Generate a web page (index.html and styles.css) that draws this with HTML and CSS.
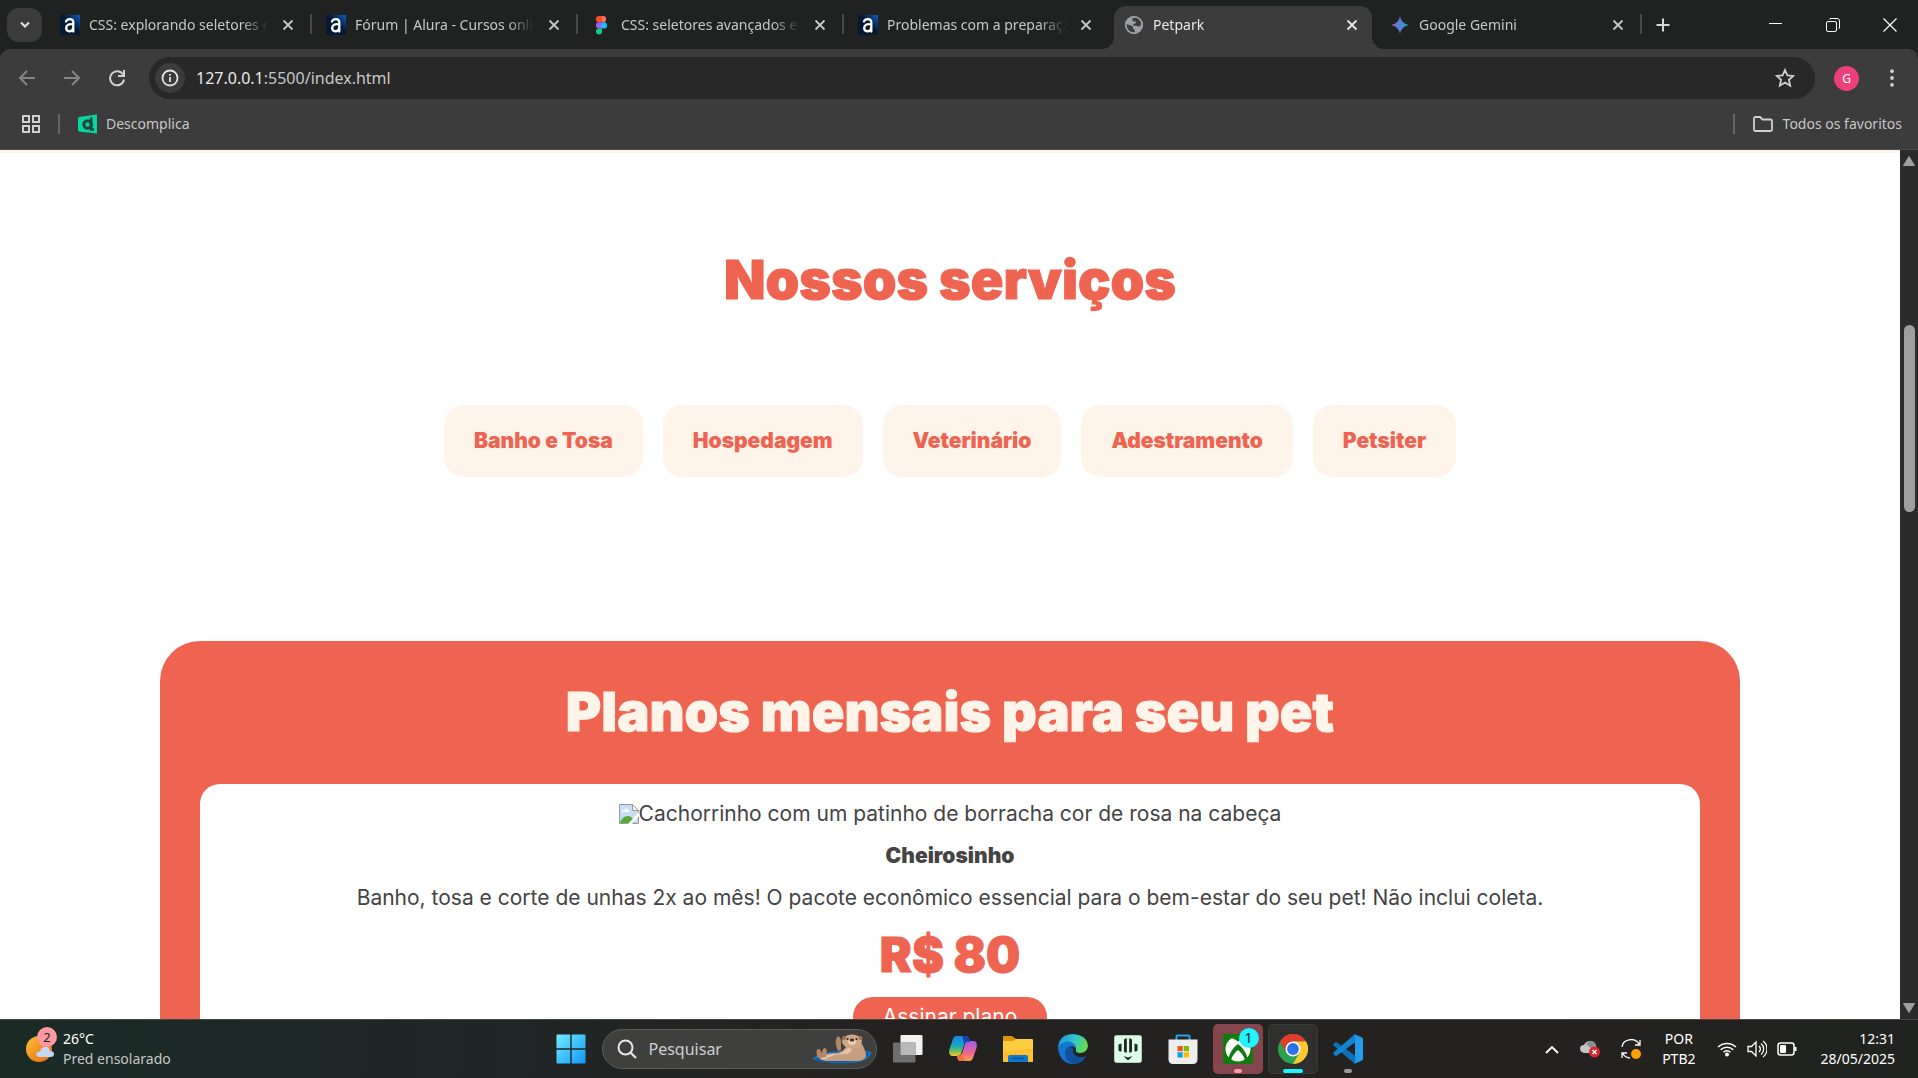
FILE: index.html
```html
<!DOCTYPE html>
<html lang="pt-br">
<head>
    <meta charset="UTF-8">
    <meta name="viewport" content="width=device-width, initial-scale=1.0">
    <title>Petpark</title>
    <link rel="stylesheet" href="styles.css">
</head>
<body>
    <!-- Shared icons -->
    <svg class="sprite" aria-hidden="true">
        <defs>
            <linearGradient id="alura-bg" x1="0" y1="1" x2="1" y2="0">
                <stop offset="0.55" stop-color="#051933"/>
                <stop offset="1" stop-color="#0c5fc4"/>
            </linearGradient>
            <linearGradient id="gemini-bg" x1="0" y1="0" x2="1" y2="0">
                <stop offset="0.1" stop-color="#a06ab4"/>
                <stop offset="0.5" stop-color="#4a84dc"/>
                <stop offset="1" stop-color="#1fa4e0"/>
            </linearGradient>
        </defs>
        <symbol id="alura" viewBox="0 0 20 20">
            <rect width="20" height="20" fill="url(#alura-bg)"/>
            <path d="M6 6.500C7 3.400 13 3 13.300 7V16.500M13 9.500C9 8.500 6.200 10 6.200 13C6.200 17 12 17.500 13 13.500" fill="none" stroke="#fff" stroke-width="2.300" stroke-linecap="round"/>
        </symbol>
        <symbol id="close" viewBox="0 0 12 12">
            <path d="M1.500 1.500L10.500 10.500M10.500 1.500L1.500 10.500" fill="none" stroke="currentColor" stroke-width="1.800"/>
        </symbol>
    </svg>

    <div class="tab-strip">
        <button class="tab-search" aria-label="Pesquisar guias">
            <svg width="12" height="8" viewBox="0 0 12 8"><path d="M2 1.500L6 5.500L10 1.500" fill="none" stroke="#e3e3e3" stroke-width="2"/></svg>
        </button>
        <div class="tabs">
            <div class="tab">
                <svg width="20" height="20"><use href="#alura"/></svg>
                <span class="tab-title">CSS: explorando seletores e estilos</span>
                <button class="tab-close" aria-label="Fechar"><svg width="12" height="12"><use href="#close"/></svg></button>
            </div>
            <div class="tab">
                <svg width="20" height="20"><use href="#alura"/></svg>
                <span class="tab-title">Fórum | Alura - Cursos online</span>
                <button class="tab-close" aria-label="Fechar"><svg width="12" height="12"><use href="#close"/></svg></button>
            </div>
            <div class="tab">
                <svg width="20" height="20" viewBox="0 0 20 20">
                    <path d="M10 1H7a3 3 0 0 0 0 6.300h3z" fill="#f24e1e"/>
                    <path d="M10 1h1a3.100 3.100 0 0 1 0 6.300h-1z" fill="#ff7262"/>
                    <path d="M10 7.300H7a3 3 0 0 0 0 6.200h3z" fill="#a259ff"/>
                    <circle cx="12" cy="10.400" r="3.100" fill="#1abcfe"/>
                    <path d="M7 13.500h3v3A3 3 0 1 1 7 13.500z" fill="#0acf83"/>
                </svg>
                <span class="tab-title">CSS: seletores avançados e mais</span>
                <button class="tab-close" aria-label="Fechar"><svg width="12" height="12"><use href="#close"/></svg></button>
            </div>
            <div class="tab">
                <svg width="20" height="20"><use href="#alura"/></svg>
                <span class="tab-title">Problemas com a preparação</span>
                <button class="tab-close" aria-label="Fechar"><svg width="12" height="12"><use href="#close"/></svg></button>
            </div>
            <div class="tab active">
                <svg width="20" height="20" viewBox="0 0 20 20">
                    <circle cx="10" cy="10" r="9" fill="#9aa0a6"/>
                    <path d="M10.500 2.500C8 3 7.500 5.500 9.500 6.500H12C13 9 9 8 9 10.500C11 11 14 10 14.500 12L18 9C17.500 5 14.500 2 10.500 2.500zM2 9C5 10 9 10.500 9 12.500C8.800 14.500 12 14 10.500 17.500C5 18 2 14 2 9z" fill="#3c3c3c"/>
                    <circle cx="10" cy="10" r="8.200" fill="none" stroke="#9aa0a6" stroke-width="1.600"/>
                </svg>
                <span class="tab-title">Petpark</span>
                <button class="tab-close" aria-label="Fechar"><svg width="12" height="12"><use href="#close"/></svg></button>
            </div>
            <div class="tab">
                <svg width="20" height="20" viewBox="0 0 20 20"><path d="M10 1C10.800 6 14 9.200 19 10C14 10.800 10.800 14 10 19C9.200 14 6 10.800 1 10C6 9.200 9.200 6 10 1z" fill="url(#gemini-bg)"/></svg>
                <span class="tab-title">Google Gemini</span>
                <button class="tab-close" aria-label="Fechar"><svg width="12" height="12"><use href="#close"/></svg></button>
            </div>
        </div>
        <button class="new-tab" aria-label="Nova guia">
            <svg width="14" height="14" viewBox="0 0 14 14"><path d="M7 0.500V13.500M0.500 7H13.500" stroke="#d6d6d6" stroke-width="2"/></svg>
        </button>
        <div class="window-controls">
            <button aria-label="Minimizar"><svg width="14" height="14" viewBox="0 0 14 14"><path d="M0 5.500H13" stroke="#fff"/></svg></button>
            <button aria-label="Restaurar"><svg width="14" height="14" viewBox="0 0 14 14"><rect x="0.500" y="3.500" width="10" height="10" rx="1.500" fill="none" stroke="#fff"/><path d="M3 1.500Q3.500 0.500 5 0.500H11Q13.500 0.500 13.500 3V9Q13.500 10.500 12.500 11" fill="none" stroke="#fff"/></svg></button>
            <button aria-label="Fechar janela"><svg width="14" height="14" viewBox="0 0 14 14"><path d="M0.500 0.500L13.500 13.500M13.500 0.500L0.500 13.500" stroke="#fff" stroke-width="1.200"/></svg></button>
        </div>
    </div>

    <div class="browser-bars">
        <div class="toolbar">
            <button aria-label="Voltar"><svg width="18" height="18" viewBox="0 0 18 18"><path d="M17 9H2.500M9 2L2 9L9 16" fill="none" stroke="#858585" stroke-width="2"/></svg></button>
            <button aria-label="Avançar"><svg width="18" height="18" viewBox="0 0 18 18"><path d="M1 9H15.500M9 2L16 9L9 16" fill="none" stroke="#858585" stroke-width="2"/></svg></button>
            <button aria-label="Recarregar"><svg width="18" height="18" viewBox="0 0 18 18"><path d="M15 5.500A7 7 0 1 0 16 10.500" fill="none" stroke="#d0d0d0" stroke-width="2"/><path d="M16 1V7H10" fill="none" stroke="#d0d0d0" stroke-width="2"/></svg></button>
            <div class="address-bar">
                <button class="site-info" aria-label="Informações do site">
                    <svg width="18" height="18" viewBox="0 0 18 18"><circle cx="9" cy="9" r="7.500" fill="none" stroke="#e3e3e3" stroke-width="1.800"/><path d="M9 8V13M9 5V6.800" stroke="#e3e3e3" stroke-width="1.800"/></svg>
                </button>
                <span class="url" role="textbox" aria-label="Endereço">127.0.0.1<span>:5500/index.html</span></span>
                <button aria-label="Favoritar">
                    <svg width="20" height="20" viewBox="0 0 20 20"><path d="M10 2L12.400 7.300L18.300 7.900L13.900 11.800L15.200 17.700L10 14.600L4.800 17.700L6.100 11.800L1.700 7.900L7.600 7.300z" fill="none" stroke="#d0d0d0" stroke-width="1.800"/></svg>
                </button>
            </div>
            <button class="profile">G</button>
            <button aria-label="Menu"><svg width="4" height="18" viewBox="0 0 4 18"><g fill="#d0d0d0"><circle cx="2" cy="2.200" r="1.900"/><circle cx="2" cy="9" r="1.900"/><circle cx="2" cy="15.800" r="1.900"/></g></svg></button>
        </div>
        <nav class="bookmarks">
            <button aria-label="Apps"><svg width="18" height="18" viewBox="0 0 18 18"><path d="M1 1H7V7H1zM11 1H17V7H11zM1 11H7V17H1zM11 11H17V17H11z" fill="none" stroke="#d0d0d0" stroke-width="2"/></svg></button>
            <span class="divider"></span>
            <a href="#">
                <svg width="20" height="20" viewBox="0 0 20 20"><path d="M1 3L19 0.500V19.500L1 17.500Q0 17 0 16V4.500Q0 3.200 1 3z" fill="#06d6a0"/><circle cx="9.500" cy="10.500" r="3.700" fill="none" stroke="#23443b" stroke-width="3"/><path d="M13.200 3.500V15.500H16" fill="none" stroke="#23443b" stroke-width="2.600"/></svg>
                Descomplica
            </a>
            <span class="divider all-bookmarks"></span>
            <a href="#">
                <svg width="20" height="16" viewBox="0 0 20 16"><path d="M1 2.500Q1 1 2.500 1H7L9.500 3.500H17.500Q19 3.500 19 5V13.500Q19 15 17.500 15H2.500Q1 15 1 13.500z" fill="none" stroke="#d0d0d0" stroke-width="1.800"/></svg>
                Todos os favoritos
            </a>
        </nav>
    </div>

    <div class="viewport">
        <main class="page">
            <section class="services">
                <h2>Nossos serviços</h2>
                <ul class="services-list">
                    <li>Banho e Tosa</li>
                    <li>Hospedagem</li>
                    <li>Veterinário</li>
                    <li>Adestramento</li>
                    <li>Petsiter</li>
                </ul>
            </section>

            <section class="plans">
                <h2>Planos mensais para seu pet</h2>
                <div class="plan">
                    <div class="plan-image">
                        <svg width="20" height="20" viewBox="0 0 20 20">
                            <path d="M0.500 0.500H13.500L19.500 6.500V19.500H0.500z" fill="#c9dcf8" stroke="#9a9a9a"/>
                            <path d="M13.500 0.500V6.500H19.500z" fill="#fff" stroke="#9a9a9a"/>
                            <path d="M3 8Q3 5.500 5.500 6Q6.500 3 8.500 5.500Q11 5.500 10.500 8z" fill="#fff"/>
                            <path d="M1 19Q3 12 9 12Q14 12 15.500 19z" fill="#55ad36"/>
                            <path d="M9 20L20 8V12L13 20z" fill="#fff"/>
                        </svg>
                        <span>Cachorrinho com um patinho de borracha cor de rosa na cabeça</span>
                    </div>
                    <h3>Cheirosinho</h3>
                    <p>Banho, tosa e corte de unhas 2x ao mês! O pacote econômico essencial para o bem-estar do seu pet! Não inclui coleta.</p>
                    <strong class="price">R$ 80</strong>
                    <button class="subscribe">Assinar plano</button>
                </div>
            </section>
        </main>
        <div class="scrollbar">
            <svg width="12" height="10" viewBox="0 0 12 10"><path d="M6 0.500L11.500 9.500H0.500z" fill="#9f9f9f" stroke="#9f9f9f" stroke-linejoin="round"/></svg>
            <div class="scroll-track"><div class="scroll-thumb"></div></div>
            <svg width="12" height="10" viewBox="0 0 12 10"><path d="M6 9.500L11.500 0.500H0.500z" fill="#9f9f9f" stroke="#9f9f9f" stroke-linejoin="round"/></svg>
        </div>
    </div>

    <footer class="taskbar">
        <button class="weather">
            <span class="weather-icon">
                <svg width="30" height="30" viewBox="0 0 30 30">
                    <defs><linearGradient id="sun" x1="0" y1="0" x2="1" y2="1"><stop offset="0" stop-color="#f8c23a"/><stop offset="1" stop-color="#ee6508"/></linearGradient></defs>
                    <circle cx="13" cy="15" r="13" fill="url(#sun)"/>
                    <path d="M13 23Q9.500 22 10.500 19Q11.500 17 14 17.500Q16 12 21 13Q24 14 24 17Q28 17 28 20Q28 23 24.500 23z" fill="#c3d6f6"/>
                </svg>
                <span class="weather-badge">2</span>
            </span>
            <span class="two-lines"><span>26°C</span><span class="muted">Pred ensolarado</span></span>
        </button>

        <div class="apps">
            <button class="app" aria-label="Iniciar">
                <svg width="30" height="30" viewBox="0 0 30 30"><defs><linearGradient id="win" x1="0" y1="0" x2="1" y2="1"><stop offset="0" stop-color="#72edff"/><stop offset="1" stop-color="#1097f5"/></linearGradient></defs><path d="M0.500 1.500Q0.500 0.500 1.500 0.500H14.300V14.300H0.500zM15.700 0.500H28.500Q29.500 0.500 29.500 1.500V14.300H15.700zM0.500 15.700H14.300V29.500H1.500Q0.500 29.500 0.500 28.500zM15.700 15.700H29.500V28.500Q29.500 29.500 28.500 29.500H15.700z" fill="url(#win)"/></svg>
            </button>
            <label class="search">
                <svg width="20" height="20" viewBox="0 0 20 20"><circle cx="8.500" cy="8.500" r="7" fill="none" stroke="#e6e6ec" stroke-width="2"/><path d="M13.500 13.500L19 19" stroke="#e6e6ec" stroke-width="2.200"/></svg>
                <input type="text" placeholder="Pesquisar">
                <svg width="60" height="30" viewBox="0 0 60 30">
                    <path d="M0 25Q8 17 30 17Q52 16 60 18Q56 29 36 29Q12 30 0 25z" fill="#1372c2"/>
                    <path d="M3 25Q14 20 52 20L57 19Q54 27 34 28Q12 29 3 25z" fill="#0d559c"/>
                    <path d="M7 25Q12 18 26 19Q34 16 35 10L50 10Q54 17 54 22Q53 27 44 27H14z" fill="#c79e80"/>
                    <path d="M12 26Q22 19 35 20Q41 18 39 13L34 15Q31 20 23 20Q14 20 9 25z" fill="#e3c4aa"/>
                    <path d="M6 24Q3 17 6 15Q9 15 10 20Q10 14 13 14Q16 15 14 23zM26 17Q22 8 25 3Q28 1 29 7V16z" fill="#b58766"/>
                    <ellipse cx="40" cy="7.500" rx="10" ry="7" fill="#cda786"/>
                    <circle cx="32" cy="4" r="2" fill="#9e7355"/><circle cx="48.500" cy="4" r="2" fill="#9e7355"/>
                    <ellipse cx="40" cy="8" rx="4" ry="3" fill="#ead0b6"/>
                    <ellipse cx="40" cy="6" rx="2.300" ry="1.500" fill="#4a3027"/>
                    <circle cx="35.500" cy="5" r="1" fill="#33231c"/><circle cx="44.500" cy="5" r="1" fill="#33231c"/>
                </svg>
            </label>
            <button class="app" aria-label="Visão de tarefas">
                <svg width="30" height="30" viewBox="0 0 30 30"><rect x="7.500" y="1" width="22" height="20" rx="1" fill="#f2f2f2"/><rect x="0" y="8.500" width="22.500" height="20" rx="1" fill="#6e6e6e"/><path d="M7.500 8.500H21.500Q22.500 8.500 22.500 9.500V21H7.500z" fill="#b9b9b9"/></svg>
            </button>
            <button class="app" aria-label="Copilot">
                <svg width="30" height="30" viewBox="0 0 30 30">
                    <defs>
                        <linearGradient id="cop-a" x1="0" y1="0" x2="0" y2="1"><stop offset="0" stop-color="#1a84ea"/><stop offset="0.500" stop-color="#17a9c2"/><stop offset="0.750" stop-color="#70bd58"/><stop offset="1" stop-color="#f5c928"/></linearGradient>
                        <linearGradient id="cop-b" x1="0" y1="0" x2="0" y2="1"><stop offset="0" stop-color="#9c5cf0"/><stop offset="0.600" stop-color="#f06693"/><stop offset="1" stop-color="#f7a346"/></linearGradient>
                    </defs>
                    <path d="M8 2H18Q20 2 21 5L22 8Q17 7 16 11L13 20Q12 22 9 22H4Q0 21 1.500 15L5 5Q6 2 8 2z" fill="url(#cop-a)"/>
                    <path d="M22 27H12Q10 27 9 23Q13 24 14 20L17 10Q18 7 21 7H26Q30 8 28.500 14L25 24Q24 27 22 27z" fill="url(#cop-b)"/>
                    <path d="M14 2H18Q20 2 21 5L22 8Q17 7 16 10Q15 3 14 2z" fill="#1e3fb4"/>
                    <path d="M9 22Q13 22 14 19L15 21Q16 26 18 27H12Q10 27 9 22z" fill="#ee7048"/>
                </svg>
            </button>
            <button class="app" aria-label="Explorador de Arquivos">
                <svg width="30" height="30" viewBox="0 0 30 30"><path d="M0 3Q0 2 1 2H9L13 5V9H0z" fill="#dc9507"/><path d="M0 7H10L13 5H29Q30 5 30 6V27Q30 28 29 28H1Q0 28 0 27z" fill="#ffcd40"/><path d="M0 18L30 14V27Q30 28 29 28H1Q0 28 0 27z" fill="#fdc02c"/><path d="M5 28V23Q5 21 7 21H23Q25 21 25 23V28z" fill="#0e77cd"/><path d="M9 24.500H21" stroke="#07529b" stroke-width="1.500"/></svg>
            </button>
            <button class="app" aria-label="Edge">
                <svg width="30" height="30" viewBox="0 0 30 30">
                    <defs><linearGradient id="edge-a" x1="0" y1="0" x2="1" y2="0.300"><stop offset="0" stop-color="#1593d9"/><stop offset="0.600" stop-color="#35c4cf"/><stop offset="1" stop-color="#62db51"/></linearGradient></defs>
                    <path d="M0 14Q1 0 15 0Q29 1 30 12Q29 19 22 19Q16 19 18 15Q18 9 10 9Q3 9 0 14z" fill="url(#edge-a)"/>
                    <path d="M0 14Q3 7 11 7.500Q17 9 18 14Q10 10 8 17Q7 26 18 30Q2 31 0 14z" fill="#1275cf"/>
                    <path d="M11 13Q15 13 15.500 16Q16 23 23 23Q26 23 28.500 21Q25 30 16 30Q6 27 7 18Q8 14 11 13z" fill="#11509b"/>
                    <path d="M15 16Q15 23 23 23Q26 23 28.500 21Q27 20 22 19Q16 19 18 15z" fill="#242220"/>
                </svg>
            </button>
            <button class="app" aria-label="Aplicativo">
                <svg width="30" height="30" viewBox="0 0 30 30"><rect x="1.500" y="1.500" width="27" height="27" rx="2" fill="#dcfce8" stroke="#b5cebe"/><path d="M5.500 10.500L8.500 9.500V17.500H7L5.500 16.500zM11 5.500L13.800 4V18.500H12L11 17.500zM16.200 4L19 5.500V17.500L18 18.500H16.200zM21.500 9.500L24.500 10.500V16.500L23 17.500H21.500zM10.500 22L15 23.500L19.500 22L15 26.500z" fill="#1d2820"/></svg>
            </button>
            <button class="app" aria-label="Microsoft Store">
                <svg width="30" height="30" viewBox="0 0 30 30"><path d="M8.500 7V2.500Q8.500 1.500 9.500 1.500H20.500Q21.500 1.500 21.500 2.500V7" fill="none" stroke="#23a3e9" stroke-width="2"/><path d="M0.500 5.500H29.500V25Q29.500 30 25 30H5Q0.500 30 0.500 25z" fill="#ededed"/><path d="M9.500 12H14.700V17.200H9.500z" fill="#f25022"/><path d="M15.700 12H21V17.200H15.700z" fill="#7fba00"/><path d="M9.500 18.200H14.700V23.500H9.500z" fill="#00a4ef"/><path d="M15.700 18.200H21V23.500H15.700z" fill="#ffb900"/></svg>
            </button>
            <button class="app xbox" aria-label="Xbox">
                <svg width="30" height="30" viewBox="0 0 30 30"><rect width="30" height="30" rx="2" fill="#107c10"/><circle cx="15" cy="15" r="12.500" fill="#fff"/><path d="M8 5Q11 4 15 7.500Q19 4 22 5Q19 2 15 2Q11 2 8 5zM15 10Q8 15 5.500 24Q6 25 8 26Q10 20 15 16Q20 20 22 26Q24 25 24.500 24Q22 15 15 10z" fill="#107c10"/></svg>
                <span class="app-badge">1</span>
                <span class="indicator"></span>
            </button>
            <button class="app chrome" aria-label="Chrome">
                <svg width="30" height="30" viewBox="0 0 30 30"><circle cx="15" cy="15" r="15" fill="#2ba24c"/><path d="M2 7.500A15 15 0 0 1 28 7.500H15L8.500 11.200V18.700z" fill="#e33b2e"/><path d="M28 7.500A15 15 0 0 1 15 30L21.500 18.700V11L15 7.500z" fill="#fcc934"/><circle cx="15" cy="15" r="7.500" fill="#fff"/><circle cx="15" cy="15" r="5.900" fill="#2c73e8"/></svg>
                <span class="indicator"></span>
            </button>
            <button class="app" aria-label="Visual Studio Code">
                <svg width="30" height="30" viewBox="0 0 30 30"><path d="M21 0L29 3.500Q30 4 30 5V25Q30 26 29 26.500L21 30L22 22V8z" fill="#259bec"/><path d="M22 30L0.500 11.500Q0 10.500 0.500 10L2 8.500Q3 8 4 8.500L22.500 22z" fill="#0b71bd"/><path d="M22 0L0.500 18.500Q0 19.500 0.500 20L2 21.500Q3 22 4 21.500L22.500 8z" fill="#1283cf"/></svg>
                <span class="indicator"></span>
            </button>
        </div>

        <div class="tray">
            <button aria-label="Ícones ocultos"><svg width="14" height="9" viewBox="0 0 14 9"><path d="M1 8L7 2L13 8" fill="none" stroke="#fff" stroke-width="1.800"/></svg></button>
            <button aria-label="OneDrive">
                <svg width="20" height="18" viewBox="0 0 20 18"><path d="M4 13Q0 12 0 8.500Q0 5 4 5Q6 1 10 1Q15 1 16 6L18 11L12 13z" fill="#c4c4c4"/><path d="M6 4Q8 1 11 1Q15 1 16 6L12 9z" fill="#8d8d8d"/><circle cx="14.500" cy="12" r="5.500" fill="#d42a35"/><path d="M12.500 10L16.500 14M16.500 10L12.500 14" stroke="#fff" stroke-width="1.400"/></svg>
            </button>
            <button aria-label="Windows Update">
                <svg width="20" height="20" viewBox="0 0 20 20"><path d="M1 8A9 8 0 0 1 18 5M19 1V6H14M9 19A9 8 0 0 1 2 15M1 19V14H6" fill="none" stroke="#fff" stroke-width="1.300"/><circle cx="15" cy="15" r="5" fill="#ff9d0a"/></svg>
            </button>
            <button class="two-lines language"><span>POR</span><span>PTB2</span></button>
            <button class="network" aria-label="Rede, som e bateria">
                <svg width="20" height="16" viewBox="0 0 20 16"><path d="M1 6A13 13 0 0 1 19 6M3.700 8.700A9 9 0 0 1 16.300 8.700M6.500 11.300A5 5 0 0 1 13.500 11.300" fill="none" stroke="#fff" stroke-width="1.500"/><circle cx="10" cy="13.500" r="2" fill="#fff"/></svg>
                <svg width="20" height="18" viewBox="0 0 20 18"><path d="M1 6.500H4.500L9 2V16L4.500 11.500H1zM12 6A4 4 0 0 1 12 12M14 3.500A7 7 0 0 1 14 14.500M16 1A10 10 0 0 1 16 17" fill="none" stroke="#fff" stroke-width="1.300"/></svg>
                <svg width="20" height="14" viewBox="0 0 20 14"><rect x="1" y="1" width="16" height="12" rx="2.500" fill="none" stroke="#fff" stroke-width="1.500"/><rect x="3" y="3" width="6" height="8" rx="1" fill="#fff"/><path d="M18.500 5V9" stroke="#fff" stroke-width="2"/></svg>
            </button>
            <button class="two-lines clock"><span>12:31</span><span>28/05/2025</span></button>
        </div>
    </footer>
</body>
</html>
```
FILE: styles.css
```css
* {
    box-sizing: border-box;
}

body {
    margin: 0;
    height: 100vh;
    display: flex;
    flex-direction: column;
    overflow: hidden;
    font-family: "Noto Sans", sans-serif;
    font-size: 14px;
    color: #e3e3e3;
    background-color: #202221;
}

button {
    display: flex;
    align-items: center;
    justify-content: center;
    padding: 0;
    border: none;
    background: none;
    color: inherit;
    font: inherit;
    cursor: pointer;
}

svg {
    display: block;
    flex-shrink: 0;
}

.sprite {
    position: absolute;
    width: 0;
    height: 0;
}

/* Tabs */
.tab-strip {
    display: flex;
    align-items: center;
    height: 49px;
    padding-left: 7px;
}

.tab-search {
    width: 35px;
    height: 34px;
    border-radius: 12px;
    background-color: #3c3c3c;
}

.tabs {
    display: flex;
    align-self: stretch;
    padding-top: 6px;
    margin-left: 4px;
}

.tab {
    position: relative;
    display: flex;
    align-items: center;
    width: 266px;
    padding: 0 17px 6px 14px;
    color: #c7c7c7;
}

.tab::after {
    content: "";
    position: absolute;
    right: 0;
    top: 8px;
    width: 2px;
    height: 20px;
    background-color: #484a49;
}

.tab:has(+ .active)::after {
    display: none;
}

.tab.active {
    width: 258px;
    margin: 0 4px;
    padding: 0 13px 6px 10px;
    color: #e8e8e8;
    background-color: #3c3c3c;
    border-radius: 12px 12px 0 0;
}

/* Curved feet of the active tab */
.tab.active::before,
.tab.active::after {
    content: "";
    position: absolute;
    top: auto;
    bottom: 0;
    width: 12px;
    height: 12px;
}

.tab.active::before {
    left: -12px;
    background: radial-gradient(circle at top left, transparent 12px, #3c3c3c 12px);
}

.tab.active::after {
    right: -12px;
    background: radial-gradient(circle at top right, transparent 12px, #3c3c3c 12px);
}

.tab-title {
    flex: 1;
    margin-left: 9px;
    overflow: hidden;
    white-space: nowrap;
    mask-image: linear-gradient(to right, #000 85%, transparent);
}

.tab-close {
    width: 14px;
    height: 20px;
    margin-left: 13px;
}

.new-tab {
    margin-left: 6px;
    padding: 8px;
}

.window-controls {
    display: flex;
    margin-left: auto;
}

.window-controls button {
    width: 57px;
    height: 48px;
}

/* Toolbar and bookmarks */
.browser-bars {
    background-color: #3c3c3c;
    border-radius: 10px 10px 0 0;
    border-bottom: 1px solid #4a4a4a;
}

.toolbar {
    display: flex;
    align-items: center;
    gap: 27px;
    padding: 8px 24px 8px 18px;
}

.address-bar {
    flex: 1;
    display: flex;
    align-items: center;
    height: 42px;
    margin-left: -4px;
    padding: 0 20px 0 6px;
    border-radius: 21px;
    background-color: #282828;
}

.site-info {
    width: 30px;
    height: 30px;
    border-radius: 50%;
    background-color: #3c3c3c;
}

.url {
    flex: 1;
    margin-left: 11px;
    font-size: 16px;
    color: #e8e8e8;
}

.url span {
    color: #c7c7c7;
}

.profile {
    width: 25px;
    height: 25px;
    margin: 0 4px 0 -8px;
    border-radius: 50%;
    background-color: #ec407a;
    color: #fff;
    font-size: 12px;
}

.bookmarks {
    display: flex;
    align-items: center;
    height: 33px;
    padding: 0 16px 0 22px;
    margin-bottom: 9px;
}

.bookmarks a {
    display: flex;
    align-items: center;
    gap: 8px;
    color: #c7c7c7;
    text-decoration: none;
}

.divider {
    width: 2px;
    height: 20px;
    margin: 0 18px;
    background-color: #656565;
}

.all-bookmarks {
    margin-left: auto;
}

.all-bookmarks + a {
    gap: 10px;
}

/* Petpark page */
.viewport {
    flex: 1;
    min-height: 0;
    display: flex;
}

.page {
    flex: 1;
    overflow: hidden;
    border-top: 3px solid #fff4ea;
    background-color: #fff;
    color: #444;
    font-family: "Inter", sans-serif;
    font-size: 21px;
    text-align: center;
}

.page h2 {
    margin: 0;
    font-size: 54px;
    font-weight: 900;
    line-height: 64px;
    -webkit-text-stroke: 1px;
}

.services {
    padding: 95px 20px 164px;
}

.services h2 {
    color: #ef6351;
}

.services-list {
    display: flex;
    flex-wrap: wrap;
    justify-content: center;
    gap: 20px;
    margin: 93px 0 0;
    padding: 0;
    list-style: none;
}

.services-list li {
    padding: 20px 30px;
    border-radius: 20px;
    background-color: #fff4ea;
    color: #ef6351;
    font-weight: 900;
    line-height: 32px;
}

.plans {
    margin: 0 160px;
    padding: 39px 40px;
    border-radius: 40px;
    background-color: #ef6351;
}

.plans h2 {
    color: #fff4ea;
}

.plan {
    display: flex;
    flex-direction: column;
    align-items: center;
    gap: 12px;
    margin-top: 40px;
    padding: 15px 20px 20px;
    border-radius: 20px;
    background-color: #fff;
    line-height: 30px;
}

.plan-image {
    display: flex;
    align-items: center;
}

.plan h3,
.plan p {
    margin: 0;
    font-size: 21px;
}

.plan h3 {
    font-weight: 900;
}

.price {
    color: #ef6351;
    font-size: 48px;
    font-weight: 900;
    line-height: 60px;
    -webkit-text-stroke: 1px;
}

.subscribe {
    padding: 5px 30px;
    border-radius: 25px;
    background-color: #ef6351;
    color: #fff;
    line-height: 30px;
}

.scrollbar {
    width: 18px;
    display: flex;
    flex-direction: column;
    align-items: center;
    padding: 6px 0;
    background-color: #2b2b2b;
}

.scroll-track {
    flex: 1;
    padding-top: 159px;
}

.scroll-thumb {
    width: 11px;
    height: 187px;
    border-radius: 6px;
    background-color: #9f9f9f;
}

/* Taskbar */
.taskbar {
    display: grid;
    grid-template-columns: 1fr auto 1fr;
    align-items: center;
    height: 59px;
    border-top: 1px solid #454746;
    background: linear-gradient(to right, #1a2b26, #202626 25%, #242220 45%, #242220 80%, #20231f);
    color: #fff;
}

.two-lines {
    display: flex;
    flex-direction: column;
    line-height: 20px;
}

.muted {
    color: #c4c8c6;
}

.weather {
    justify-self: start;
    gap: 7px;
    padding-left: 26px;
}

.weather .two-lines {
    align-items: flex-start;
}

.weather-icon {
    position: relative;
}

.weather-badge {
    position: absolute;
    top: -7px;
    right: -1px;
    width: 20px;
    height: 20px;
    border-radius: 50%;
    background-color: #ff99a4;
    color: #222;
    font-size: 13px;
    line-height: 20px;
}

.apps {
    display: flex;
    align-items: center;
    gap: 5px;
}

.app {
    position: relative;
    width: 50px;
    height: 50px;
    border-radius: 5px;
}

.search {
    display: flex;
    align-items: center;
    width: 275px;
    height: 40px;
    margin: 0 1px;
    padding: 0 4px 0 14px;
    border: 1px solid #5b5c5a;
    border-radius: 20px;
    background-color: #3f403e;
}

.search input {
    flex: 1;
    min-width: 0;
    margin-left: 8px;
    padding: 0 4px;
    border: none;
    outline: none;
    background: none;
    color: #fff;
    font: inherit;
    font-size: 16px;
}

.search input::placeholder {
    color: #cfcfcf;
}

.indicator {
    position: absolute;
    bottom: 1px;
    left: 50%;
    width: 8px;
    height: 4px;
    border-radius: 2px;
    background-color: #9a9a9a;
    transform: translateX(-50%);
}

.xbox {
    background-color: #84454c;
}

.xbox .indicator {
    background-color: #ff99a4;
}

.app-badge {
    position: absolute;
    top: 4px;
    right: 4px;
    width: 20px;
    height: 20px;
    border-radius: 50%;
    background-color: #1ff4ff;
    color: #222;
    line-height: 20px;
}

.chrome {
    border: 1px solid #3a3a39;
    background-color: #2f2f2e;
}

.chrome .indicator {
    bottom: 0;
    width: 20px;
    background-color: #1ff4ff;
}

.tray {
    display: flex;
    align-items: center;
    justify-content: flex-end;
    gap: 21px;
    padding-right: 23px;
}

.language {
    align-items: center;
}

.network {
    gap: 10px;
}

.clock {
    align-items: flex-end;
    margin-left: 3px;
}
```
